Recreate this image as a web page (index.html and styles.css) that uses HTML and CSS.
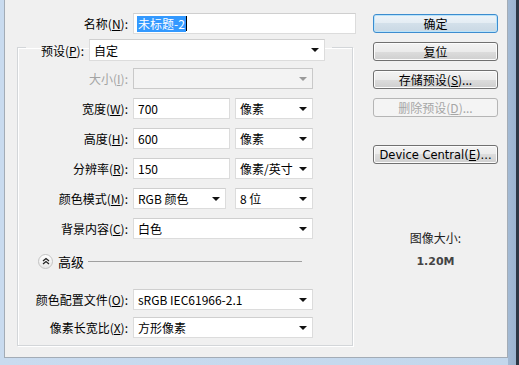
FILE: index.html
```html
<!DOCTYPE html>
<html lang="zh-CN">
<head>
    <meta charset="UTF-8">
    <title>新建</title>
    <link rel="stylesheet" href="styles.css">
</head>
<body>
    <div class="window">
        <div class="main">
            <div class="row name-row">
                <span class="lbl">名称(<u>N</u>):</span>
                <div class="box name-box"><span class="picked">未标题-2</span><span class="caret"></span></div>
            </div>

            <fieldset class="group">
                <legend class="legend">
                    <span class="lbl legend-lbl">预设(<u>P</u>):</span>
                    <div class="box combo preset">自定<i class="arrow"></i></div>
                </legend>

                <div class="row first off">
                    <span class="lbl">大小(<u>I</u>):</span>
                    <div class="box combo full"><i class="arrow"></i></div>
                </div>
                <div class="row">
                    <span class="lbl">宽度(<u>W</u>):</span>
                    <div class="box num">700</div>
                    <div class="box combo unit">像素<i class="arrow"></i></div>
                </div>
                <div class="row">
                    <span class="lbl">高度(<u>H</u>):</span>
                    <div class="box num">600</div>
                    <div class="box combo unit">像素<i class="arrow"></i></div>
                </div>
                <div class="row">
                    <span class="lbl">分辨率(<u>R</u>):</span>
                    <div class="box num">150</div>
                    <div class="box combo unit">像素/英寸<i class="arrow"></i></div>
                </div>
                <div class="row">
                    <span class="lbl">颜色模式(<u>M</u>):</span>
                    <div class="box combo mode">RGB 颜色<i class="arrow"></i></div>
                    <div class="box combo unit bits">8 位<i class="arrow"></i></div>
                </div>
                <div class="row">
                    <span class="lbl">背景内容(<u>C</u>):</span>
                    <div class="box combo full">白色<i class="arrow"></i></div>
                </div>

                <div class="advanced">
                    <span class="toggle">
                        <svg width="8" height="8" viewBox="0 0 8 8">
                            <path d="M1 4 L4 1.5 L7 4 M1 7 L4 4.5 L7 7" fill="none" stroke="#222" stroke-width="1.3"/>
                        </svg>
                    </span>
                    <span class="adv-text">高级</span>
                    <span class="adv-line"></span>
                </div>

                <div class="row">
                    <span class="lbl">颜色配置文件(<u>O</u>):</span>
                    <div class="box combo full">sRGB IEC61966-2.1<i class="arrow"></i></div>
                </div>
                <div class="row tight">
                    <span class="lbl">像素长宽比(<u>X</u>):</span>
                    <div class="box combo full">方形像素<i class="arrow"></i></div>
                </div>
            </fieldset>
        </div>

        <div class="side">
            <button class="btn default">确定</button>
            <button class="btn">复位</button>
            <button class="btn">存储预设(<u>S</u>)...</button>
            <button class="btn" disabled>删除预设(<u>D</u>)...</button>
            <button class="btn device">Device Central(<u>E</u>)...</button>

            <div class="size-info">
                <p>图像大小:</p>
                <p class="size-val">1.20M</p>
            </div>
        </div>
    </div>
</body>
</html>
```

FILE: styles.css
```css
/* General reset */
* {
    margin: 0;
    padding: 0;
    box-sizing: border-box;
}

body {
    width: 519px;
    height: 365px;
    overflow: hidden;
    font-family: "Noto Sans CJK SC", "Noto Sans", sans-serif;
    font-size: 12px;
    color: #000;
    /* window frame colours round the dialog */
    background: linear-gradient(to right, #c9dbef 0, #c3d7ec 508px, #a3bad4 508px, #9bb3cf 516px, #2d3744 516px);
}

.window {
    display: flex;
    width: 504px;
    height: 358px;
    margin-left: 4px;
    background-color: #f0f0f0;
    border: 1px solid #a3acb6;
    border-top: none;
    padding-top: 13px;
}

u {
    text-decoration: underline;
    text-underline-offset: 1px;
}

/* left column */
.main {
    width: 351px;
}

.row {
    display: flex;
    align-items: center;
    height: 21px;
    margin-top: 9px;
    gap: 5px;
}

.row.first {
    margin-top: 7px;
}

.row.tight {
    margin-top: 7px;
}

.name-row {
    margin-top: 0;
}

.lbl {
    flex: none;
    width: 110px;
    text-align: right;
    line-height: 21px;
    white-space: nowrap;
}

.name-row .lbl {
    width: 123px;
}

.off .lbl {
    color: #a3a3a3;
}

.box {
    height: 21px;
    line-height: 19px;
    background-color: #fff;
    border: 1px solid #dcdcdc;
    border-top-color: #cfcfcf;
    padding-left: 4px;
    white-space: nowrap;
}

.name-box {
    width: 223px;
    padding-left: 3px;
    display: flex;
    align-items: center;
}

.picked {
    background-color: #3399ff;
    color: #fff;
    line-height: 16px;
    padding: 0 1px;
}

.caret {
    width: 1px;
    height: 15px;
    background-color: #000;
}

.combo {
    display: flex;
    align-items: center;
    justify-content: space-between;
    padding-right: 5px;
}

.arrow {
    width: 0;
    height: 0;
    margin-left: auto;
    border-left: 4px solid transparent;
    border-right: 4px solid transparent;
    border-top: 4px solid #111;
}

.off .combo {
    background-color: #f3f3f3;
    border-color: #c9c9c9;
}

.off .arrow {
    border-top-color: #9a9a9a;
}

.full { width: 180px; }
.num { width: 97px; }
.unit { width: 78px; }
.mode { width: 93px; }
.bits { margin-left: 4px; }

/* preset group box */
.group {
    margin-left: 12px;
    width: 336px;
    height: 312px;
    border: 1px solid #d3d6d9;
    box-shadow: inset 1px 1px 0 #fff, 1px 1px 0 #fff;
    padding: 0;
}

.legend {
    display: flex;
    align-items: center;
    margin-left: 8px;
    padding: 5px 7px 0 0;
}

.legend-lbl {
    width: 58px;
    margin-right: 5px;
}

.preset {
    width: 236px;
    height: 22px;
}

/* "advanced" divider */
.advanced {
    display: flex;
    align-items: center;
    height: 16px;
    margin: 14px 0 20px 20px;
}

.toggle {
    display: flex;
    align-items: center;
    justify-content: center;
    width: 15px;
    height: 15px;
    border-radius: 50%;
    border: 1px solid #c3c3c3;
    background: linear-gradient(#ffffff, #e6e6e6);
}

.adv-text {
    margin-left: 5px;
    font-size: 13px;
}

.adv-line {
    width: 214px;
    height: 1px;
    margin-left: 4px;
    background-color: #a0a0a0;
}

/* right column */
.side {
    display: flex;
    flex-direction: column;
    margin-left: 17px;
    width: 125px;
    padding-top: 1px;
}

.btn {
    height: 19px;
    margin-bottom: 9px;
    font-family: "Noto Sans CJK SC", "Noto Sans", sans-serif;
    font-size: 12px;
    line-height: 16px;
    color: #000;
    border: 1px solid #707070;
    border-radius: 3px;
    background: linear-gradient(#f3f3f3 0, #ebebeb 50%, #dddddd 50%, #cfcfcf 100%);
    box-shadow: inset 0 0 0 1px #fcfcfc;
}

.btn.default {
    border-color: #3c8ccf;
    background: linear-gradient(#eef4f9 0, #e3ecf3 50%, #d3e0ea 50%, #c9d8e4 100%);
    box-shadow: inset 0 0 0 1px #b9e3fa;
}

.btn:disabled {
    color: #a6a6a6;
    border-color: #b5b5b5;
    background: #f4f4f4;
    box-shadow: none;
}

.btn.device {
    margin-top: 19px;
    font-family: "DejaVu Sans", sans-serif;
    font-size: 11.5px;
}

.size-info {
    margin-top: 53px;
    text-align: center;
    color: #222;
}

.size-info p {
    line-height: 24px;
}

.size-val {
    font-family: "DejaVu Sans", sans-serif;
    font-weight: bold;
    font-size: 11px;
    color: #444;
}
```
